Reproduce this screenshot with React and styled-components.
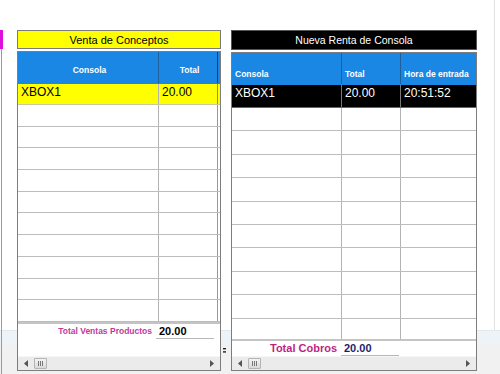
import styled, { createGlobalStyle } from "styled-components";

const GlobalStyle = createGlobalStyle`
  html, body {
    margin: 0;
    padding: 0;
    background: #fff;
  }
  body {
    font-family: "Liberation Sans", Arial, sans-serif;
  }
`;

const Page = styled.div`
  width: 500px;
  height: 374px;
  overflow: hidden;
  display: flex;
  align-items: flex-start;
  padding-top: 30px;
  box-sizing: border-box;
  background:
    linear-gradient(to right, transparent 494px, #e2e2e2 494px, #e2e2e2 495px, transparent 495px) 0 0 / 100% 330px no-repeat,
    linear-gradient(to bottom, #fff 0, #fff 330px, #e3e8ee 330px, #e3e8ee 331px, #eef3f8 331px, #eef3f8 345px, #f1f1f1 345px);
`;

const LeftEdge = styled.div`
  width: 3px;
  display: flex;
  flex-direction: column;
  align-self: stretch;
  margin-right: 14px;
`;

const MagentaTab = styled.div`
  height: 19px;
  background: #dd10dd;
`;

const EdgeLine = styled.div`
  flex: 1;
  width: 1px;
  margin-left: 1px;
  background: #9a9a9a;
`;

const Panel = styled.div`
  width: ${({ width }) => width}px;
  display: flex;
  flex-direction: column;
  gap: 2px;
`;

const TitleBar = styled.div`
  height: ${({ h }) => h}px;
  box-sizing: border-box;
  border: 1px solid ${({ dark }) => (dark ? "#555" : "#7a7a7a")};
  background: ${({ dark }) => (dark ? "#000" : "#ffff00")};
  color: ${({ dark }) => (dark ? "#fff" : "#000")};
  font-size: ${({ size }) => size}px;
  display: flex;
  align-items: center;
  justify-content: center;
`;

const TableBox = styled.div`
  height: ${({ h }) => h}px;
  box-sizing: border-box;
  border: 1px solid #7d7d7d;
  display: flex;
  flex-direction: column;
  background: #fff;
`;

const GridArea = styled.div`
  overflow: hidden;
  border-bottom: 2px solid #c4c4c4;
`;

const Row = styled.div`
  display: grid;
  grid-template-columns: ${({ cols }) => cols};
  height: ${({ h }) => h}px;
  background: ${({ bg }) => bg || "#fff"};
  color: ${({ fg }) => fg || "#000"};
  border-bottom: 1px solid ${({ line }) => line || "#bdbdbd"};
  box-sizing: border-box;
`;

const HeadCell = styled.div`
  display: flex;
  align-items: flex-end;
  justify-content: ${({ center }) => (center ? "center" : "flex-start")};
  padding: 0 0 ${({ pb }) => pb}px 3px;
  font-size: 8.5px;
  font-weight: bold;
  color: #fff;
  border-right: 1px solid ${({ edge }) => edge || "#1f5f9a"};
  white-space: nowrap;
  overflow: hidden;
`;

const Cell = styled.div`
  font-size: 12px;
  padding: 1px 0 0 3px;
  border-right: 1px solid ${({ edge }) => edge || "#b3b3b3"};
  white-space: nowrap;
  overflow: hidden;
  line-height: 1.2;
`;

const Footer = styled.div`
  flex: 1;
  display: grid;
  grid-template-columns: ${({ cols }) => cols};
  align-content: start;
  padding-top: ${({ pt }) => pt}px;
`;

const TotalLabel = styled.div`
  text-align: right;
  padding-right: 4px;
  font-weight: bold;
  font-size: ${({ size }) => size}px;
  color: ${({ color }) => color};
  line-height: 12px;
  white-space: nowrap;
`;

const TotalValue = styled.div`
  font-weight: bold;
  font-size: 11px;
  line-height: 12px;
  padding-left: 3px;
  color: ${({ color }) => color};
  border-bottom: 1px solid #b8b8b8;
  padding-bottom: 1px;
`;

const ScrollBar = styled.div`
  height: 13px;
  background: #ebebeb;
  border-top: 1px solid #f6f6f6;
  display: flex;
  align-items: center;
  padding: 0 6px;
  gap: 6px;
`;

const Thumb = styled.div`
  width: 13px;
  height: 11px;
  box-sizing: border-box;
  border: 1px solid #b4b4b4;
  background: linear-gradient(#f3f3f3, #d9d9d9);
  border-radius: 1px;
  display: flex;
  align-items: center;
  justify-content: center;
  gap: 1px;
  span {
    width: 1px;
    height: 5px;
    background: #777;
  }
`;

const Spacer = styled.div`
  flex: 1;
`;

const Gutter = styled.div`
  width: 10px;
  align-self: stretch;
  display: flex;
  flex-direction: column;
  justify-content: flex-end;
  padding-bottom: 21px;
  padding-left: 2px;
  box-sizing: border-box;
`;

const Arrow = ({ dir }) => (
  <svg width="4" height="7" viewBox="0 0 4 7">
    {dir === "left" ? (
      <path d="M4 0 L0 3.5 L4 7 Z" fill="#555" />
    ) : (
      <path d="M0 0 L4 3.5 L0 7 Z" fill="#555" />
    )}
  </svg>
);

const HScroll = () => (
  <ScrollBar>
    <Arrow dir="left" />
    <Thumb>
      <span />
      <span />
      <span />
    </Thumb>
    <Spacer />
    <Arrow dir="right" />
  </ScrollBar>
);

const leftCols = "141px 59px 60px";
const rightCols = "110px 59px 1fr";

export default function App() {
  const leftEmpty = Array.from({ length: 10 });
  const rightEmpty = Array.from({ length: 10 });

  return (
    <>
      <GlobalStyle />
      <Page>
        <LeftEdge>
          <MagentaTab />
          <EdgeLine />
        </LeftEdge>

        <Panel width={204}>
          <TitleBar h={19} size={11}>Venta de Conceptos</TitleBar>
          <TableBox h={320}>
            <GridArea>
              <Row cols={leftCols} h={32} bg="#1a87e5" line="#1a87e5">
                <HeadCell center pb={8}>Consola</HeadCell>
                <HeadCell center pb={8} edge="#123e66">Total</HeadCell>
                <HeadCell pb={8} />
              </Row>
              <Row cols={leftCols} h={21} bg="#ffff00" line="#c9c9a0">
                <Cell>XBOX1</Cell>
                <Cell edge="#888">20.00</Cell>
                <Cell />
              </Row>
              {leftEmpty.map((_, i) => (
                <Row key={i} cols={leftCols} h={21.7}>
                  <Cell />
                  <Cell edge="#999" />
                  <Cell />
                </Row>
              ))}
            </GridArea>
            <Footer cols="138px 58px" pt={1}>
              <TotalLabel size={8.5} color="#c2399b">
                Total Ventas Productos
              </TotalLabel>
              <TotalValue color="#000">20.00</TotalValue>
            </Footer>
            <HScroll />
          </TableBox>
        </Panel>

        <Gutter>
          <svg width="3" height="5" viewBox="0 0 3 5">
            <rect x="0" y="0" width="3" height="1.4" fill="#222" />
            <rect x="0" y="3.2" width="3" height="1.4" fill="#222" />
          </svg>
        </Gutter>

        <Panel width={246}>
          <TitleBar h={20} size={10.5} dark>
            Nueva Renta de Consola
          </TitleBar>
          <TableBox h={319}>
            <GridArea>
              <Row cols={rightCols} h={32} bg="#1a87e5" line="#1a87e5">
                <HeadCell pb={5}>Consola</HeadCell>
                <HeadCell pb={5}>Total</HeadCell>
                <HeadCell pb={5} edge="transparent">Hora de entrada</HeadCell>
              </Row>
              <Row cols={rightCols} h={23} bg="#000" fg="#fff" line="#666">
                <Cell edge="#777">XBOX1</Cell>
                <Cell edge="#777">20.00</Cell>
                <Cell edge="transparent">20:51:52</Cell>
              </Row>
              {rightEmpty.map((_, i) => (
                <Row key={i} cols={rightCols} h={23.4}>
                  <Cell />
                  <Cell />
                  <Cell edge="transparent" />
                </Row>
              ))}
            </GridArea>
            <Footer cols="109px 58px" pt={1}>
              <TotalLabel size={11} color="#bf1f82">
                Total Cobros
              </TotalLabel>
              <TotalValue color="#1b1f6b">20.00</TotalValue>
            </Footer>
            <HScroll />
          </TableBox>
        </Panel>
      </Page>
    </>
  );
}
